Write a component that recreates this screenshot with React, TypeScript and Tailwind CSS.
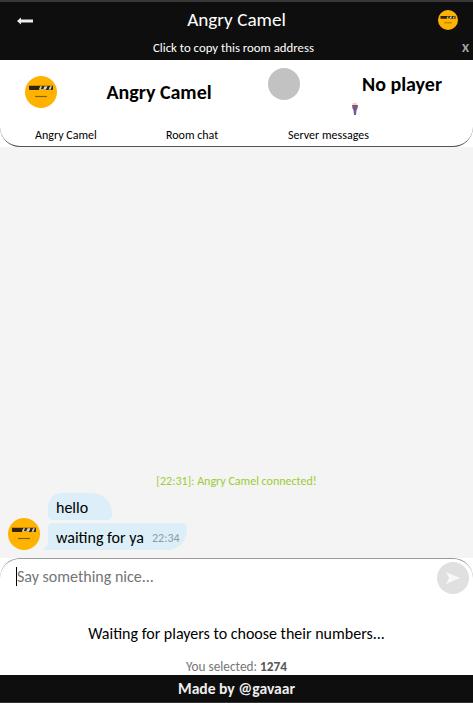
import React from 'react';

function Face({ className }: { className: string }) {
  return (
    <svg viewBox="0 0 32 32" className={className}>
      <circle cx="16" cy="16" r="16" fill="#ffb300" />
      <path d="M4 9.700h24v3.500q0 .800-.800 .800h-8.500l-1-1h-3l-1 1h-8.900q-.800 0-.800-.800z" fill="#30250c" />
      <path d="M15.300 10.200h1.800l-1.400 3h-1.800zM19.500 10.200h3l-1.600 3.500h-3zM25 10.200h2l-1.500 3.500h-2z" fill="#d8d0be" />
      <path d="M10 20.500h12" stroke="#80600c" strokeWidth="1.200" />
    </svg>
  );
}

export default function App() {
  return (
    <div className="flex h-[703px] w-[473px] flex-col overflow-hidden bg-white font-['Carlito','Lato',sans-serif] text-black">
      <header className="h-[60px] shrink-0 border-t-2 border-[#383838] bg-[#0e0e0e] text-white">
        <div className="grid h-9 grid-cols-[50px_1fr_50px] items-center">
          <svg viewBox="0 0 16 8" className="mt-px ml-[17px] h-2 w-4" fill="#eee">
            <path d="M0 4l4-3.500v2h12v3h-12v2z" />
          </svg>
          <h1 className="text-center text-[19.200px] leading-6">Angry Camel</h1>
          <Face className="ml-[15px] h-5 w-5" />
        </div>
        <div className="grid h-5 grid-cols-[14px_1fr_20px] items-center text-[12.800px]">
          <span />
          <span className="text-center">Click to copy this room address</span>
          <span className="pl-[9px] font-bold text-[#aaa]">X</span>
        </div>
      </header>

      <section className="h-[87px] shrink-0 rounded-b-[20px] border-b border-[#555] bg-white">
        <div className="flex h-[66px]">
          <Face className="mt-4 ml-[25px] h-8 w-8" />
          <strong className="mt-5 ml-[49px] w-[106px] text-center text-[20px] leading-6 whitespace-nowrap">Angry Camel</strong>
          <span className="mt-2 ml-14 h-8 w-8 rounded-full bg-[#c2c2c2]" />
          <svg viewBox="0 0 8 13" className="mt-[43px] ml-[51px] h-[13px] w-2">
            <path d="M1.500 0h4.500v2.500h-4.500z" fill="#f3d5b5" />
            <path d="M1 2h6l-.5 3.500-1 1.500-.5 5h-2l-.5-5-1-1.500z" fill="#76598a" />
          </svg>
          <strong className="mt-3 ml-[3px] w-20 text-center text-[20px] leading-6 whitespace-nowrap">No player</strong>
        </div>
        <nav className="flex h-[18px] items-center text-[12px] leading-[18px] whitespace-nowrap">
          <span className="ml-[35px] w-[131px]">Angry Camel</span>
          <span className="w-[122px]">Room chat</span>
          <span>Server messages</span>
        </nav>
      </section>

      <main className="flex h-[411px] shrink-0 flex-col justify-end bg-[#f4f4f4]">
        <p className="mb-1 text-center text-[12px] leading-4 text-[#9acd32]">[22:31]: Angry Camel connected!</p>
        <div className="mb-2 flex items-end">
          <Face className="ml-2 h-8 w-8" />
          <div className="ml-2 flex flex-col items-start gap-[3px]">
            <div className="h-[27px] w-16 rounded-[5px] rounded-t-[20px] rounded-tl-[14px] bg-[#dceef7] pl-2 text-[16px] leading-[29px]">hello</div>
            <div className="relative flex h-[27px] w-[139px] rounded-tl-[5px] rounded-tr-[5px] rounded-br-[20px] bg-[#dceef7] pl-2 leading-[29px] whitespace-nowrap">
              <svg viewBox="0 0 6 6" className="absolute bottom-0 -left-1.5 h-1.5 w-1.5" fill="#dceef7"><path d="M0 6q4-1 6-6v6z" /></svg>
              <span className="w-24 text-[16px]">waiting for ya</span>
              <time className="pt-px text-[12px] text-[#8d9ba4]">22:34</time>
            </div>
          </div>
        </div>
      </main>

      <section className="h-[52px] shrink-0 rounded-t-[20px] border-t border-[#999] bg-white">
        <div className="flex items-start">
          <div className="mt-2 ml-4 flex h-[19px] w-[421px] items-center border-l border-black pt-px text-[16px] text-[#757575]">Say something nice...</div>
          <button className="mt-[3px] flex h-8 w-8 items-center justify-center rounded-full bg-[#e0e0e0]">
            <svg viewBox="0 0 14 12" className="mb-px h-3 w-3.5" fill="#f8f8f8"><path d="M0 0l14 6-14 6 3-6z" /></svg>
          </button>
        </div>
      </section>
      <section className="flex h-[65px] shrink-0 flex-col items-center bg-white">
        <p className="mt-3.5 text-[16px] leading-5">Waiting for players to choose their numbers...</p>
        <p className="mt-[15px] text-[13.300px] leading-4 text-[#777]">You selected: <b className="text-[#555]">1274</b></p>
      </section>
      <footer className="h-7 shrink-0 border-b border-[#333] bg-[#0e0e0e] text-center text-[15.600px] leading-[28px] font-bold text-[#eee]">Made by @gavaar</footer>
    </div>
  );
}
